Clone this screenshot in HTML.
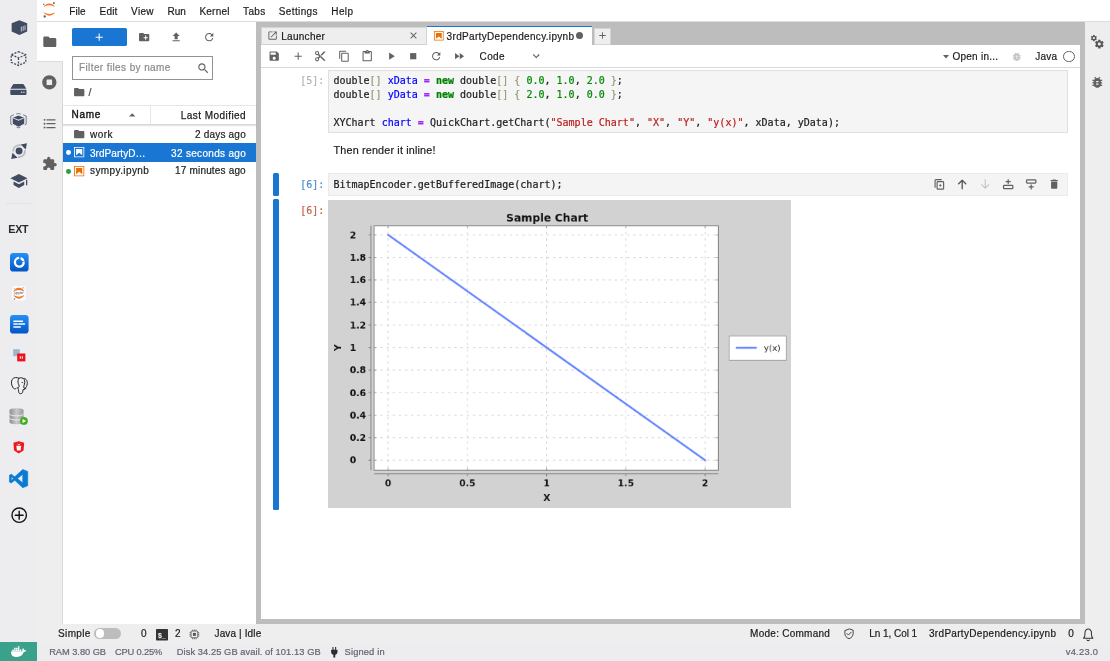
<!DOCTYPE html>
<html lang="en">
<head>
<meta charset="utf-8">
<title>JupyterLab</title>
<style>
*{box-sizing:border-box;margin:0;padding:0}
html,body{width:1110px;height:661px;overflow:hidden;background:#fff}
body{position:relative;font-family:"Liberation Sans",Arial,sans-serif;font-size:10px;color:rgba(0,0,0,.87)}
#root{position:absolute;left:0;top:0;width:1110px;height:661px;will-change:transform}
.abs{position:absolute}
.t{position:absolute;white-space:nowrap;line-height:12px;-webkit-text-stroke:.2px}
svg{position:absolute;overflow:visible}
/* docker chrome */
#dside{left:0;top:0;width:37px;height:643px;background:#ededf0}
#dfoot{left:0;top:642.6px;width:1110px;height:18.4px;background:#ededf0}
#whale{left:0;top:642.2px;width:37px;height:18.8px;background:#3aa18a}
.ft{color:#6d7079;font-size:9.2px}
/* jupyter */
#menubar{left:37px;top:0;width:1073px;height:21.5px;background:#fff;border-bottom:1px solid #dcdcdc}
.menu{font-size:10px;top:5.5px}
#lside{left:37px;top:61px;width:25.5px;height:563px;background:#eee;border-right:1.5px solid #d9d9d9;border-top:1px solid #dcdcdc}
#lside-active{left:37px;top:21.5px;width:26px;height:39.5px;background:#fff}
#fb{left:62.5px;top:21.5px;width:193px;height:602.5px;background:#fff}
#dock{left:255.5px;top:21.5px;width:829.5px;height:602.5px;background:#bdbdbd}
#rside{left:1085px;top:21.5px;width:25px;height:602.5px;background:#eee}
#status{left:37px;top:624px;width:1073px;height:18.6px;background:#eee}
#panel{left:261px;top:45.3px;width:819px;height:574px;background:#fff}
#tab1{left:261px;top:26.5px;width:165.5px;height:18.8px;background:#eee;border:1px solid #d4d4d4;border-bottom:1px solid #d0d0d0}
#tab2{left:426.5px;top:25.5px;width:165.5px;height:20.3px;background:#fff;border-top:1.6px solid #1976d2}
#tabplus{left:593.5px;top:27.5px;width:17.5px;height:17px;background:#eee;border:1px solid #d4d4d4}
#toolbar{left:261px;top:45.3px;width:819px;height:23px;background:#fff;border-bottom:1px solid #d9d9d9}
.cellin{background:#f5f5f5;border:1px solid #e0e0e0}
.code{font-family:"Liberation Mono","DejaVu Sans Mono",monospace;font-size:10px;line-height:14.15px;white-space:pre;position:absolute}
.k{color:#008000;font-weight:bold}.o{color:#a2f;font-weight:bold}.d{color:#00f}.n{color:#080}.s{color:#ba2121}.b{color:#997}
.prompt{font-family:"Liberation Mono",monospace;font-size:10px;position:absolute;line-height:14px;white-space:pre}
.bar{background:#1976d2;border-radius:1.5px}
</style>
</head>
<body>
<div id="root">
<!-- ============ Docker Desktop chrome ============ -->
<div id="dside" class="abs"></div>
<div id="dfoot" class="abs"></div>
<div id="whale" class="abs"></div>

<!-- ============ JupyterLab ============ -->
<div id="menubar" class="abs"></div>
<div id="lside" class="abs"></div>
<div id="lside-active" class="abs"></div>
<div id="fb" class="abs"></div>
<div id="dock" class="abs"></div>
<div id="rside" class="abs"></div>
<div id="status" class="abs"></div>
<div id="panel" class="abs"></div>
<div id="tab1" class="abs"></div>
<div id="tab2" class="abs"></div>
<div id="tabplus" class="abs"></div>
<div id="toolbar" class="abs"></div>

<svg style="left:43.2px;top:2.2px" width="12.4" height="15.9" viewBox="0 0 39 51" preserveAspectRatio="none"><g transform="translate(-1638 -2281)"><g fill="#F37726"><path transform="translate(1639.74 2311.98)" d="M 18.2646 7.13411C 10.4145 7.13411 3.55872 4.2576 0 0C 1.32539 3.8204 3.79556 7.13081 7.0686 9.47303C 10.3417 11.8152 14.2557 13.0734 18.269 13.0734C 22.2823 13.0734 26.1963 11.8152 29.4694 9.47303C 32.7424 7.13081 35.2126 3.8204 36.538 0C 32.9705 4.2576 26.1148 7.13411 18.2646 7.13411Z"/><path transform="translate(1639.73 2285.48)" d="M 18.2733 5.93931C 26.1235 5.93931 32.9793 8.81583 36.538 13.0734C 35.2126 9.25303 32.7424 5.94262 29.4694 3.6004C 26.1963 1.25818 22.2823 0 18.269 0C 14.2557 0 10.3417 1.25818 7.0686 3.6004C 3.79556 5.94262 1.32539 9.25303 0 13.0734C 3.56745 8.82463 10.4232 5.93931 18.2733 5.93931Z"/></g><g fill="#616161"><circle cx="1672.25" cy="2284.27" r="2.95"/><circle cx="1643.5" cy="2327.55" r="3.7"/><circle cx="1640.54" cy="2288.26" r="2.2"/></g></g></svg>
<div class="t" style="left:69.2px;top:5px;font-size:10px;line-height:13px;letter-spacing:0.09px">File</div><div class="t" style="left:99.5px;top:5px;font-size:10px;line-height:13px;letter-spacing:0.22px">Edit</div><div class="t" style="left:131.1px;top:5px;font-size:10px;line-height:13px;letter-spacing:0.30px">View</div><div class="t" style="left:167.5px;top:5px;font-size:10px;line-height:13px;letter-spacing:-0.03px">Run</div>
<div class="t" style="left:199.4px;top:5px;font-size:10px;line-height:13px;letter-spacing:0.24px">Kernel</div><div class="t" style="left:243.0px;top:5px;font-size:10px;line-height:13px;letter-spacing:0.39px">Tabs</div><div class="t" style="left:278.8px;top:5px;font-size:10px;line-height:13px;letter-spacing:0.37px">Settings</div><div class="t" style="left:331.3px;top:5px;font-size:10px;line-height:13px;letter-spacing:0.37px">Help</div>

<div class="abs" style="left:71.7px;top:27.7px;width:55.4px;height:18.4px;background:#1976d2;border-radius:1.6px"></div>
<svg style="left:93.3px;top:30.7px" width="12.4" height="12.4" viewBox="0 0 24 24" ><path fill="#fff" d="M19 13h-6v6h-2v-6H5v-2h6V5h2v6h6v2z"/></svg>
<svg style="left:138.2px;top:31.2px" width="12.3" height="12.3" viewBox="0 0 24 24" ><path fill="#616161" d="M20 6h-8l-2-2H4c-1.11 0-1.99.89-1.99 2L2 18c0 1.11.89 2 2 2h16c1.11 0 2-.89 2-2V8c0-1.11-.89-2-2-2zm-1 8h-3v3h-2v-3h-3v-2h3V9h2v3h3v2z"/></svg>
<svg style="left:170.4px;top:31.2px" width="12.3" height="12.3" viewBox="0 0 24 24" ><path fill="#616161" d="M9 16h6v-6h4l-7-7-7 7h4zm-4 2h14v2H5z"/></svg>
<svg style="left:202.8px;top:30.8px" width="12.4" height="12.4" viewBox="0 0 18 18" ><path fill="#616161" d="M9 13.5c-2.49 0-4.5-2.01-4.5-4.5S6.51 4.5 9 4.5c1.24 0 2.36.52 3.17 1.33L10 8h5V3l-1.76 1.76C12.15 3.68 10.66 3 9 3 5.69 3 3.01 5.69 3.01 9S5.69 15 9 15c2.97 0 5.43-2.16 5.9-5h-1.52c-.46 2-2.24 3.5-4.38 3.5z"/></svg>
<div class="abs" style="left:71.6px;top:56px;width:141.6px;height:23.9px;border:1px solid #939393;background:#fff"></div>
<div class="t" style="left:79.0px;top:61px;font-size:10px;line-height:13px;letter-spacing:0.39px;color:#8a8a8a">Filter files by name</div>
<svg style="left:196.6px;top:61.6px" width="12.4" height="12.4" viewBox="0 0 18 18" ><path fill="#616161" d="M12.1,10.9h-0.7l-0.2-0.2c0.8-0.9,1.3-2.2,1.3-3.5c0-3-2.4-5.4-5.4-5.4S1.8,4.2,1.8,7.1s2.4,5.4,5.4,5.4 c1.3,0,2.5-0.5,3.5-1.3l0.2,0.2v0.7l4.1,4.1l1.2-1.2L12.1,10.9z M7.1,10.9c-2.1,0-3.7-1.7-3.7-3.7s1.7-3.7,3.7-3.7s3.7,1.7,3.7,3.7 S9.2,10.9,7.1,10.9z"/></svg>
<svg style="left:73px;top:85.6px" width="12.4" height="12.4" viewBox="0 0 24 24" ><path fill="#616161" d="M10 4H4c-1.1 0-1.99.9-1.99 2L2 18c0 1.1.9 2 2 2h16c1.1 0 2-.9 2-2V8c0-1.1-.9-2-2-2h-8l-2-2z"/></svg>
<div class="t" style="left:88.5px;top:85px;font-size:10.5px;line-height:14px;color:#444">/</div>
<div class="abs" style="left:62.5px;top:104.6px;width:193px;height:20.2px;border-top:1px solid #e6e6e6;border-bottom:1px solid #d6d6d6;box-shadow:0 1px 1.5px rgba(0,0,0,.12)"></div>
<div class="abs" style="left:149.5px;top:105.6px;width:1px;height:18.4px;background:#e6e6e6"></div>
<div class="t" style="left:71.5px;top:108px;font-size:10px;line-height:13px;letter-spacing:0.70px;-webkit-text-stroke:.45px rgba(0,0,0,.8)">Name</div>
<svg style="left:129.4px;top:112.6px" width="6.4" height="3.6" viewBox="0 0 8 4.5"><path d="M0 4.500L4 .3l4 4.200z" fill="#616161"/></svg>
<div class="t" style="left:180.8px;top:109px;font-size:10px;line-height:13px;letter-spacing:0.45px;-webkit-text-stroke:.25px rgba(0,0,0,.8)">Last Modified</div>
<svg style="left:73.2px;top:128.2px" width="12.4" height="12.4" viewBox="0 0 24 24" ><path fill="#616161" d="M10 4H4c-1.1 0-1.99.9-1.99 2L2 18c0 1.1.9 2 2 2h16c1.1 0 2-.9 2-2V8c0-1.1-.9-2-2-2h-8l-2-2z"/></svg>
<div class="t" style="left:90.0px;top:128px;font-size:10px;line-height:13px;letter-spacing:0.46px">work</div>
<div class="t" style="left:194.9px;top:128px;font-size:10px;line-height:13px;letter-spacing:0.21px">2 days ago</div>
<div class="abs" style="left:62.5px;top:143.4px;width:193px;height:18.4px;background:#1976d2"></div>
<div class="abs" style="left:66.1px;top:150.4px;width:4.8px;height:4.8px;border-radius:50%;background:#fff"></div>
<svg style="left:73.2px;top:146.3px" width="12.3" height="12.3" viewBox="0 0 22 22"><g fill="#fff"><path d="M18.7 3.3v15.4H3.3V3.3h15.4m1.5-1.5H1.8v18.3h18.3l.1-18.3z"/><path d="M16.5 16.5l-5.4-4.3-5.6 4.3v-11h11z"/></g></svg>
<div class="t" style="left:90.0px;top:147px;font-size:10px;line-height:13px;letter-spacing:0.05px;color:#fff">3rdPartyD…</div>
<div class="t" style="left:171.1px;top:147px;font-size:10px;line-height:13px;letter-spacing:0.31px;color:#fff">32 seconds ago</div>
<div class="abs" style="left:66.1px;top:168.8px;width:4.8px;height:4.8px;border-radius:50%;background:#2e9d3e"></div>
<svg style="left:73.2px;top:164.9px" width="12.3" height="12.3" viewBox="0 0 22 22"><g fill="#EF6C00"><path d="M18.7 3.3v15.4H3.3V3.3h15.4m1.5-1.5H1.8v18.3h18.3l.1-18.3z"/><path d="M16.5 16.5l-5.4-4.3-5.6 4.3v-11h11z"/></g></svg>
<div class="t" style="left:90.0px;top:164px;font-size:10px;line-height:13px;letter-spacing:0.40px">sympy.ipynb</div>
<div class="t" style="left:175.1px;top:164px;font-size:10px;line-height:13px;letter-spacing:0.17px">17 minutes ago</div>

<svg style="left:267.3px;top:30.2px" width="11.2" height="11.2" viewBox="0 0 24 24" ><path fill="#616161" d="M19 19H5V5h7V3H5a2 2 0 00-2 2v14a2 2 0 002 2h14c1.1 0 2-.9 2-2v-7h-2v7zM14 3v2h3.59l-9.83 9.83 1.41 1.41L19 6.41V10h2V3h-7z"/></svg>
<div class="t" style="left:281.2px;top:30px;font-size:10px;line-height:13px;letter-spacing:0.29px">Launcher</div>
<svg style="left:408.3px;top:30.3px" width="11" height="11" viewBox="0 0 24 24" ><path fill="#616161" d="M19 6.41L17.59 5 12 10.59 6.41 5 5 6.41 10.59 12 5 17.59 6.41 19 12 13.41 17.59 19 19 17.59 13.41 12z"/></svg>
<svg style="left:432.6px;top:30px" width="11.6" height="11.6" viewBox="0 0 22 22"><g fill="#EF6C00"><path d="M18.7 3.3v15.4H3.3V3.3h15.4m1.5-1.5H1.8v18.3h18.3l.1-18.3z"/><path d="M16.5 16.5l-5.4-4.3-5.6 4.3v-11h11z"/></g></svg>
<div class="t" style="left:446.6px;top:30px;font-size:10px;line-height:13px;letter-spacing:0.33px">3rdPartyDependency.ipynb</div>
<div class="abs" style="left:575.6px;top:32.3px;width:7.2px;height:7.2px;border-radius:50%;background:#616161"></div>
<svg style="left:596.5px;top:30.4px" width="11" height="11" viewBox="0 0 24 24" ><path fill="#616161" d="M19 13h-6v6h-2v-6H5v-2h6V5h2v6h6v2z"/></svg>

<svg style="left:268.2px;top:50.1px" width="12.4" height="12.4" viewBox="0 0 24 24" ><path fill="#616161" d="M17 3H5c-1.11 0-2 .9-2 2v14c0 1.1.89 2 2 2h14c1.1 0 2-.9 2-2V7l-4-4zm-5 16c-1.66 0-3-1.34-3-3s1.34-3 3-3 3 1.34 3 3-1.34 3-3 3zm3-10H5V5h10v4z"/></svg>
<svg style="left:291.6px;top:50.1px" width="12.4" height="12.4" viewBox="0 0 24 24" ><path fill="#616161" d="M19 13h-6v6h-2v-6H5v-2h6V5h2v6h6v2z"/></svg>
<svg style="left:314.4px;top:50.1px" width="12.4" height="12.4" viewBox="0 0 24 24" ><path fill="#616161" d="M9.64 7.64c.23-.5.36-1.05.36-1.64 0-2.21-1.79-4-4-4S2 3.79 2 6s1.79 4 4 4c.59 0 1.14-.13 1.64-.36L10 12l-2.36 2.36C7.14 14.13 6.59 14 6 14c-2.21 0-4 1.79-4 4s1.79 4 4 4 4-1.79 4-4c0-.59-.13-1.14-.36-1.64L12 14l7 7h3v-1L9.64 7.64zM6 8c-1.1 0-2-.89-2-2s.9-2 2-2 2 .89 2 2-.9 2-2 2zm0 12c-1.1 0-2-.89-2-2s.9-2 2-2 2 .89 2 2-.9 2-2 2zm6-7.5c-.28 0-.5-.22-.5-.5s.22-.5.5-.5.5.22.5.5-.22.5-.5.5zM19 3l-6 6 2 2 7-7V3z"/></svg>
<svg style="left:337.6px;top:50.1px" width="12.4" height="12.4" viewBox="0 0 18 18" ><path fill="#616161" d="M11.9,1H3.2C2.4,1,1.7,1.7,1.7,2.5v10.2h1.5V2.5h8.7V1z M14.1,3.9h-8c-0.8,0-1.5,0.7-1.5,1.5v10.2c0,0.8,0.7,1.5,1.5,1.5h8 c0.8,0,1.5-0.7,1.5-1.5V5.4C15.5,4.6,14.9,3.9,14.1,3.9z M14.1,15.5h-8V5.4h8V15.5z"/></svg>
<svg style="left:360.7px;top:50.1px" width="12.4" height="12.4" viewBox="0 0 24 24" ><path fill="#616161" d="M19 2h-4.18C14.4.84 13.3 0 12 0c-1.3 0-2.4.84-2.82 2H5c-1.1 0-2 .9-2 2v16c0 1.1.9 2 2 2h14c1.1 0 2-.9 2-2V4c0-1.1-.9-2-2-2zm-7 0c.55 0 1 .45 1 1s-.45 1-1 1-1-.45-1-1 .45-1 1-1zm7 18H5V4h2v3h10V4h2v16z"/></svg>
<svg style="left:385.0px;top:50.1px" width="12.4" height="12.4" viewBox="0 0 24 24" ><path fill="#616161" d="M8 5v14l11-7z"/></svg>
<svg style="left:406.9px;top:50.1px" width="12.4" height="12.4" viewBox="0 0 24 24" ><path fill="#616161" d="M6 6h12v12H6z"/></svg>
<svg style="left:430.2px;top:50.1px" width="12.4" height="12.4" viewBox="0 0 18 18" ><path fill="#616161" d="M9 13.5c-2.49 0-4.5-2.01-4.5-4.5S6.51 4.5 9 4.5c1.24 0 2.36.52 3.17 1.33L10 8h5V3l-1.76 1.76C12.15 3.68 10.66 3 9 3 5.69 3 3.01 5.69 3.01 9S5.69 15 9 15c2.97 0 5.43-2.16 5.9-5h-1.52c-.46 2-2.24 3.5-4.38 3.5z"/></svg>
<svg style="left:453.4px;top:50.1px" width="12.4" height="12.4" viewBox="0 0 24 24" ><path fill="#616161" d="M4 18l8.5-6L4 6v12zm9-12v12l8.5-6L13 6z"/></svg>
<div class="t" style="left:479.6px;top:50px;font-size:10px;line-height:13px;letter-spacing:0.33px">Code</div>
<svg style="left:530.2px;top:50.4px" width="12.4" height="12.4" viewBox="0 0 18 18" ><path fill="#616161" d="M5.2,5.9L9,9.7l3.8-3.8l1.2,1.2l-4.9,5l-4.9-5L5.2,5.9z"/></svg>
<svg style="left:943px;top:54.6px" width="6" height="4" viewBox="0 0 6 4"><path d="M0 0h6L3 3.6z" fill="#616161"/></svg>
<div class="t" style="left:952.5px;top:50px;font-size:10px;line-height:13px;letter-spacing:0.24px">Open in...</div>
<svg style="left:1011.3px;top:50.6px" width="11.4" height="11.4" viewBox="0 0 24 24" ><path fill="#c4c4c4" d="M20 8h-2.81c-.45-.78-1.07-1.45-1.82-1.96L17 4.41 15.59 3l-2.17 2.17C12.96 5.06 12.49 5 12 5c-.49 0-.96.06-1.41.17L8.41 3 7 4.41l1.62 1.63C7.88 6.55 7.26 7.22 6.81 8H4v2h2.09c-.05.33-.09.66-.09 1v1H4v2h2v1c0 .34.04.67.09 1H4v2h2.81c1.04 1.79 2.97 3 5.19 3s4.15-1.21 5.19-3H20v-2h-2.09c.05-.33.09-.66.09-1v-1h2v-2h-2v-1c0-.34-.04-.67-.09-1H20V8zm-6 8h-4v-2h4v2zm0-4h-4v-2h4v2z"/></svg>
<div class="t" style="left:1035.2px;top:50px;font-size:10px;line-height:13px;letter-spacing:0.26px">Java</div>
<div class="abs" style="left:1063.4px;top:50.8px;width:11.4px;height:11.4px;border-radius:50%;border:1.1px solid #616161"></div>

<div class="abs cellin" style="left:328.4px;top:70.2px;width:739.8px;height:63.2px"></div>
<div class="t" style="font-family:'DejaVu Sans Mono','Liberation Mono',monospace;font-size:10px;line-height:13px;left:294.4px;width:30px;text-align:right;top:74px;color:#b4b4b4">[5]:</div>
<div class="t" style="font-family:'DejaVu Sans Mono','Liberation Mono',monospace;font-size:10.03px;line-height:13px;left:333.4px;top:74px;white-space:pre;color:#212121">double<span class="b">[]</span> <span class="d">xData</span> <span class="o">=</span> <span class="k">new</span> double<span class="b">[]</span> <span class="b">{</span> <span class="n">0.0</span>, <span class="n">1.0</span>, <span class="n">2.0</span> <span class="b">}</span>;</div><div class="t" style="font-family:'DejaVu Sans Mono','Liberation Mono',monospace;font-size:10.03px;line-height:13px;left:333.4px;top:88px;white-space:pre;color:#212121">double<span class="b">[]</span> <span class="d">yData</span> <span class="o">=</span> <span class="k">new</span> double<span class="b">[]</span> <span class="b">{</span> <span class="n">2.0</span>, <span class="n">1.0</span>, <span class="n">0.0</span> <span class="b">}</span>;</div><div class="t" style="font-family:'DejaVu Sans Mono','Liberation Mono',monospace;font-size:10.03px;line-height:13px;left:333.4px;top:116px;white-space:pre;color:#212121">XYChart <span class="d">chart</span> <span class="o">=</span> QuickChart.getChart(<span class="s">&quot;Sample Chart&quot;</span>, <span class="s">&quot;X&quot;</span>, <span class="s">&quot;Y&quot;</span>, <span class="s">&quot;y(x)&quot;</span>, xData, yData);</div>
<div class="t" style="left:333.6px;top:143px;font-size:10.8px;line-height:14px;letter-spacing:0.16px">Then render it inline!</div>
<div class="abs bar" style="left:272.9px;top:173.3px;width:6.2px;height:22.3px"></div>
<div class="abs bar" style="left:272.9px;top:199.4px;width:6.2px;height:310.2px"></div>
<div class="abs cellin" style="left:328.4px;top:173.1px;width:739.8px;height:22.6px;border-color:#ebebeb;background:#f4f4f4"></div>
<div class="t" style="font-family:'DejaVu Sans Mono','Liberation Mono',monospace;font-size:10px;line-height:13px;left:294.4px;width:30px;text-align:right;top:178px;color:#4a8fcb">[6]:</div>
<div class="t" style="font-family:'DejaVu Sans Mono','Liberation Mono',monospace;font-size:10.03px;line-height:13px;left:333.4px;top:178px;white-space:pre;color:#212121">BitmapEncoder.getBufferedImage(chart);</div>
<div class="t" style="font-family:'DejaVu Sans Mono','Liberation Mono',monospace;font-size:10px;line-height:13px;left:294.4px;width:30px;text-align:right;top:204px;color:#c4654a">[6]:</div>
<svg style="left:932.6px;top:177.9px" width="12.4" height="12.4" viewBox="0 0 16 16" fill="none" stroke="#616161" stroke-width="1.6" stroke-linecap="round" stroke-linejoin="round"><path d="M2.7 11.8V3.1a1 1 0 0 1 1-1h7" stroke-width="1.5"/><rect x="5.3" y="4.7" width="8.4" height="9.7" rx="1" stroke-width="1.5"/><path d="M8.2 9.6h2.6M9.5 8.3v2.6" stroke-width="1"/></svg>
<svg style="left:955.8px;top:178.2px" width="12.4" height="12.4" viewBox="0 0 16 16" fill="none" stroke="#555" stroke-width="1.6" stroke-linecap="round" stroke-linejoin="round"><path d="M8 14V3M3.4 7.4L8 2.8l4.6 4.6" stroke-width="1.7"/></svg>
<svg style="left:978.8px;top:178.2px" width="12.4" height="12.4" viewBox="0 0 16 16" fill="none" stroke="#c2c2c2" stroke-width="1.6" stroke-linecap="round" stroke-linejoin="round"><path d="M8 2v11M3.4 8.6L8 13.2l4.6-4.6" stroke-width="1.3"/></svg>
<svg style="left:1002.0px;top:178.4px" width="12.4" height="12.4" viewBox="0 0 16 16" fill="none" stroke="#616161" stroke-width="1.6" stroke-linecap="round" stroke-linejoin="round"><rect x="2" y="9.6" width="12" height="4.2" rx="1"/><path d="M8 2v5.4M5.3 4.7h5.4" stroke-width="1.5"/></svg>
<svg style="left:1025.0px;top:178.2px" width="12.4" height="12.4" viewBox="0 0 16 16" fill="none" stroke="#616161" stroke-width="1.6" stroke-linecap="round" stroke-linejoin="round"><rect x="2" y="2.4" width="12" height="4.2" rx="1"/><path d="M8 8.8v5.4M5.3 11.5h5.4" stroke-width="1.5"/></svg>
<svg style="left:1048.2px;top:177.9px" width="12.4" height="12.4" viewBox="0 0 24 24"><path fill="#616161" d="M6 19c0 1.1.9 2 2 2h8c1.1 0 2-.9 2-2V7H6v12zM19 4h-3.500l-1-1h-5l-1 1H5v2h14V4z"/></svg>

<svg style="left:328.4px;top:199.6px" width="462.5" height="307.9" preserveAspectRatio="none" viewBox="0 0 600 400" font-family="'DejaVu Sans','Liberation Sans',sans-serif"><rect width="600" height="400" fill="#d2d2d2"/><rect x="59.9" y="33.6" width="446.5" height="317.59999999999997" fill="#fff"/><path d="M59.9 45.3H506.4M59.9 74.6H506.4M59.9 103.9H506.4M59.9 133.1H506.4M59.9 162.4H506.4M59.9 191.7H506.4M59.9 221.0H506.4M59.9 250.3H506.4M59.9 279.5H506.4M59.9 308.8H506.4M59.9 338.1H506.4M78.0 33.6V351.2M180.8 33.6V351.2M283.6 33.6V351.2M386.4 33.6V351.2M489.2 33.6V351.2" stroke="#cdcdcd" stroke-width="1" stroke-dasharray="3 5" fill="none"/><path d="M59.9 45.3h3M506.4 45.3h-3M59.9 74.6h3M506.4 74.6h-3M59.9 103.9h3M506.4 103.9h-3M59.9 133.1h3M506.4 133.1h-3M59.9 162.4h3M506.4 162.4h-3M59.9 191.7h3M506.4 191.7h-3M59.9 221.0h3M506.4 221.0h-3M59.9 250.3h3M506.4 250.3h-3M59.9 279.5h3M506.4 279.5h-3M59.9 308.8h3M506.4 308.8h-3M59.9 338.1h3M506.4 338.1h-3M78.0 33.6v3M78.0 351.2v-3M180.8 33.6v3M180.8 351.2v-3M283.6 33.6v3M283.6 351.2v-3M386.4 33.6v3M386.4 351.2v-3M489.2 33.6v3M489.2 351.2v-3" stroke="#9a9a9a" stroke-width="1" fill="none"/><path d="M78.0 45.3L489.2 338.1" stroke="#4b72ff" stroke-opacity=".85" stroke-width="2.5" stroke-linecap="round" fill="none"/><rect x="59.9" y="33.6" width="446.5" height="317.59999999999997" fill="none" stroke="#7d7d7d" stroke-width="1.1"/><path d="M55.8 33.6V351.2M59.9 355.7H506.4M52.6 45.3H55.8M52.6 74.6H55.8M52.6 103.9H55.8M52.6 133.1H55.8M52.6 162.4H55.8M52.6 191.7H55.8M52.6 221.0H55.8M52.6 250.3H55.8M52.6 279.5H55.8M52.6 308.8H55.8M52.6 338.1H55.8M78.0 355.8V359M180.8 355.8V359M283.6 355.8V359M386.4 355.8V359M489.2 355.8V359" stroke="#7d7d7d" stroke-width="1.1" fill="none"/><g font-weight="bold" font-size="12" fill="#111"><text x="28.2" y="49.7">2</text><text x="28.2" y="79.0">1.8</text><text x="28.2" y="108.3">1.6</text><text x="28.2" y="137.5">1.4</text><text x="28.2" y="166.8">1.2</text><text x="28.2" y="196.1">1</text><text x="28.2" y="225.4">0.8</text><text x="28.2" y="254.7">0.6</text><text x="28.2" y="283.9">0.4</text><text x="28.2" y="313.2">0.2</text><text x="28.2" y="342.5">0</text><text x="78.0" y="372.2" text-anchor="middle">0</text><text x="180.8" y="372.2" text-anchor="middle">0.5</text><text x="283.6" y="372.2" text-anchor="middle">1</text><text x="386.4" y="372.2" text-anchor="middle">1.5</text><text x="489.2" y="372.2" text-anchor="middle">2</text><text x="283.9" y="390.8" text-anchor="middle">X</text><text transform="translate(17.2 191.9) rotate(-90)" text-anchor="middle">Y</text><text x="284.3" y="28.3" text-anchor="middle" font-size="14">Sample Chart</text></g><rect x="520.4" y="176.8" width="74" height="31.5" fill="#fff" stroke="#9b9b9b" stroke-width="1"/><path d="M530 192H555.2" stroke="#4b72ff" stroke-opacity=".85" stroke-width="2.5" stroke-linecap="round"/><text x="565.4" y="196" font-size="11" fill="#222">y(x)</text></svg>

<div class="t" style="left:58.1px;top:627px;font-size:10px;line-height:13px;letter-spacing:0.32px">Simple</div>
<div class="abs" style="left:94.3px;top:627.9px;width:26.5px;height:11.2px;border-radius:5.6px;background:#bdbdbd"></div>
<div class="abs" style="left:95.9px;top:629.2px;width:8.6px;height:8.6px;border-radius:50%;background:#fff"></div>
<div class="t" style="left:140.9px;top:627px;font-size:10px;line-height:13px">0</div>
<svg style="left:156px;top:628.8px" width="12" height="11.4" viewBox="0 0 12 11.4"><rect width="12" height="11.4" rx=".6" fill="#333"/><text x="2" y="8.6" font-family="'Liberation Sans',sans-serif" font-weight="bold" font-size="7" fill="#fff">$_</text></svg>
<div class="t" style="left:175.1px;top:627px;font-size:10px;line-height:13px">2</div>
<svg style="left:189.4px;top:628.6px" width="10.8" height="10.8" viewBox="0 0 16 16" fill="none" stroke="#555" stroke-width="1.3"><rect x="3" y="3" width="10" height="10" rx="1.6"/><rect x="5.8" y="5.8" width="4.4" height="4.4" fill="#555" stroke="none"/><path d="M5.5 .8v2M8 .8v2M10.500 .8v2M5.500 13.200v2M8 13.200v2M10.500 13.200v2M.8 5.500h2M.8 8h2M.8 10.500h2M13.200 5.500h2M13.200 8h2M13.200 10.500h2" stroke-width="1.1"/></svg>
<div class="t" style="left:214.5px;top:627px;font-size:10px;line-height:13px;letter-spacing:0.13px">Java | Idle</div>
<div class="t" style="left:750.1px;top:627px;font-size:10px;line-height:13px;letter-spacing:0.26px">Mode: Command</div>
<svg style="left:843.4px;top:627.6px" width="12" height="11.6" viewBox="0 0 24 24" fill="none" stroke="#3c3c3c" stroke-width="2" stroke-linejoin="round" stroke-linecap="round"><path d="M12 2.200L3.400 5.400v5.800c0 5.200 3.600 9.400 8.600 10.800 5-1.400 8.600-5.600 8.600-10.800V5.400z"/><path d="M7.800 11.600l3 3 5.600-5.800"/></svg>
<div class="t" style="left:869.2px;top:627px;font-size:10px;line-height:13px;letter-spacing:-0.04px">Ln 1, Col 1</div>
<div class="t" style="left:929.0px;top:627px;font-size:10px;line-height:13px;letter-spacing:0.31px">3rdPartyDependency.ipynb</div>
<div class="t" style="left:1068.2px;top:627px;font-size:10px;line-height:13px">0</div>
<svg style="left:1081.4px;top:626.8px" width="14.4" height="15" viewBox="0 0 24 25" fill="none" stroke="#333" stroke-width="1.7" stroke-linejoin="round" stroke-linecap="round"><path d="M4.200 18.600h15.600c-1.500-1.500-2.400-3-2.400-6.200v-2.800c0-3.400-2.300-6.200-5.400-6.200s-5.400 2.800-5.400 6.200v2.800c0 3.200-.9 4.700-2.400 6.200z"/><path d="M10 21.600c.5.800 1.200 1.200 2 1.200s1.500-.4 2-1.200"/></svg>
<svg style="left:10.8px;top:643.9px" width="15.2" height="15.2" viewBox="0 0 24 24"><path fill="#fff" d="M13.983 11.078h2.119a.186.186 0 00.186-.185V9.006a.186.186 0 00-.186-.186h-2.119a.185.185 0 00-.185.185v1.888c0 .102.083.185.185.185m-2.954-5.43h2.118a.186.186 0 00.186-.186V3.574a.186.186 0 00-.186-.185h-2.118a.185.185 0 00-.185.185v1.888c0 .102.082.185.185.185m0 2.716h2.118a.187.187 0 00.186-.186V6.29a.186.186 0 00-.186-.185h-2.118a.185.185 0 00-.185.185v1.887c0 .102.082.185.185.186m-2.93 0h2.12a.186.186 0 00.184-.186V6.29a.185.185 0 00-.185-.185H8.1a.185.185 0 00-.185.185v1.887c0 .102.083.185.185.186m-2.964 0h2.119a.186.186 0 00.185-.186V6.29a.185.185 0 00-.185-.185H5.136a.186.186 0 00-.186.185v1.887c0 .102.084.185.186.186m5.893 2.715h2.118a.186.186 0 00.186-.185V9.006a.186.186 0 00-.186-.186h-2.118a.185.185 0 00-.185.185v1.888c0 .102.082.185.185.185m-2.93 0h2.12a.185.185 0 00.184-.185V9.006a.185.185 0 00-.184-.186h-2.12a.185.185 0 00-.184.185v1.888c0 .102.083.185.185.185m-2.964 0h2.119a.185.185 0 00.185-.185V9.006a.185.185 0 00-.184-.186h-2.12a.186.186 0 00-.186.186v1.887c0 .102.084.185.186.185m-2.92 0h2.12a.185.185 0 00.184-.185V9.006a.185.185 0 00-.184-.186h-2.12a.185.185 0 00-.184.185v1.888c0 .102.082.185.185.185M23.763 9.89c-.065-.051-.672-.51-1.954-.51-.338.001-.676.03-1.01.087-.248-1.7-1.653-2.53-1.716-2.566l-.344-.199-.226.327c-.284.438-.49.922-.612 1.43-.23.97-.09 1.882.403 2.661-.595.332-1.55.413-1.744.42H.751a.751.751 0 00-.75.748 11.376 11.376 0 00.692 4.062c.545 1.428 1.355 2.48 2.41 3.124 1.18.723 3.1 1.137 5.275 1.137.983.003 1.963-.086 2.93-.266a12.248 12.248 0 003.823-1.389c.98-.567 1.86-1.288 2.61-2.136 1.252-1.418 1.998-2.997 2.553-4.4h.221c1.372 0 2.215-.549 2.68-1.009.309-.293.55-.65.707-1.046l.098-.288z"/></svg>
<div class="t" style="left:49.2px;top:646px;font-size:9.3px;line-height:12px;letter-spacing:-0.05px;color:#62666f">RAM 3.80 GB</div>
<div class="t" style="left:115.0px;top:646px;font-size:9.3px;line-height:12px;letter-spacing:-0.16px;color:#62666f">CPU 0.25%</div>
<div class="t" style="left:176.8px;top:646px;font-size:9.3px;line-height:12px;letter-spacing:0.07px;color:#62666f">Disk 34.25 GB avail. of 101.13 GB</div>
<svg style="left:330px;top:646.6px" width="8.6" height="10.6" viewBox="0 0 16 20"><path fill="#2b2d33" d="M4.500 0h2v5h3V0h2v5H14v4.500c0 2.600-1.800 4.700-4.200 5.300V20H6.200v-5.200C3.800 14.200 2 12.100 2 9.500V5h2.500z"/></svg>
<div class="t" style="left:344.6px;top:646px;font-size:9.3px;line-height:12px;letter-spacing:0.15px;color:#62666f">Signed in</div>
<div class="t" style="left:1065.7px;top:646px;font-size:9.3px;line-height:12px;letter-spacing:0.30px;color:#62666f">v4.23.0</div>

<!-- containers -->
<svg style="left:10.6px;top:19.8px" width="16.8" height="15.2" viewBox="0 0 22 20"><path fill="#424c60" d="M11 .4l10.200 4v10.600L11 19.600.8 15V4.400z"/><path d="M13.600 8.800v6.400M16 7.900v6.400M18.400 7v6.400" stroke="#c3c7cf" stroke-width="1.300"/></svg>
<!-- images -->
<svg style="left:10.400px;top:50.800px" width="17" height="15.200" viewBox="0 0 22 20" fill="none" stroke="#424c60" stroke-width="1.700" stroke-dasharray="2.600 1.700"><path d="M11 1l9.600 3.800v10L11 19 1.400 14.800v-10z"/><path d="M1.800 5.200L11 9l9.200-3.800M11 9.400V18.600"/></svg>
<!-- volumes -->
<svg style="left:10.400px;top:83.800px" width="16.800" height="11" viewBox="0 0 22 14.400"><path fill="#424c60" d="M5.200 0h11.600a1.400 1.400 0 0 1 1.250.77L21.400 6.200H.6L3.950.77A1.400 1.400 0 0 1 5.200 0zM.4 7.400h21.200v5.600a1.400 1.400 0 0 1-1.400 1.400H1.800A1.400 1.400 0 0 1 .4 13z"/><circle cx="15.200" cy="10.800" r="1" fill="#d5d8de"/><circle cx="18.200" cy="10.800" r="1" fill="#d5d8de"/></svg>
<!-- dev environments -->
<svg style="left:10.400px;top:112.600px" width="17" height="14.800" viewBox="0 0 22 19"><path fill="#424c60" d="M11 3.200l7.400 2.900v7.800L11 17.600l-7.400-3.700V6.100z"/><path d="M3.900 6.200L11 9.200l7.100-3" stroke="#dfe1e6" stroke-width="1.300" fill="none"/><path d="M5 2.200L1 3.900v10.400l2 1M17 2.200l4 1.700v10.400l-2 1M8 1.300L11 .5l3 .8M8.500 18.200l2.500.9 2.500-.9" fill="none" stroke="#424c60" stroke-width="1.100" stroke-opacity=".8"/></svg>
<!-- scout -->
<svg style="left:10.800px;top:142.600px" width="16.200" height="16.200" viewBox="0 0 20 20"><circle cx="10" cy="10" r="7.300" fill="none" stroke="#b7bcc6" stroke-width="2.200" stroke-dasharray="14 8.930" transform="rotate(-10 10 10)"/><circle cx="10" cy="10" r="4.300" fill="#424c60"/><path fill="#424c60" d="M19.700.3L18.200 8.100 11.900 1.800zM.3 19.700L1.800 11.900 8.100 18.200z"/></svg>
<!-- learning center -->
<svg style="left:10.400px;top:174.200px" width="17.800" height="14.600" viewBox="0 0 24 19.700"><path fill="#424c60" d="M12 0l11.600 5.800L12 11.600.4 5.800zM4.800 10.200L12 13.800l7.200-3.600v4.600L12 18.800l-7.200-4zM21.600 7.600h1.700v7.600h-1.700z"/></svg>
<div class="abs" style="left:6.300px;top:203.300px;width:24.400px;height:1px;background:#e1e1e6"></div>
<div class="t" style="left:8.3px;top:222px;font-size:10.7px;line-height:14px;letter-spacing:-0.25px;color:#2a2a2c;font-weight:bold;-webkit-text-stroke:0">EXT</div>
<!-- ext 1: blue ring -->
<svg style="left:9.800px;top:253.300px" width="18.600" height="18.600" viewBox="0 0 20 20"><defs><linearGradient id="bg1" x1="0" y1="0" x2="0" y2="1"><stop offset="0" stop-color="#2490f5"/><stop offset="1" stop-color="#0553c4"/></linearGradient></defs><rect width="20" height="20" rx="3.600" fill="url(#bg1)"/><circle cx="10" cy="10" r="4.700" fill="none" stroke="#fff" stroke-width="2.500" stroke-dasharray="22.100 1.500 4.400 1.530" transform="rotate(-8 10 10)"/></svg>
<!-- ext 2: jupyter -->
<svg style="left:12.100px;top:286.400px" width="13.800" height="14.600" viewBox="0 0 20 21"><rect width="20" height="21" rx="3.400" fill="#fafbfd"/><path d="M1.800 8.600C3.200 4.800 6.400 2.600 10 2.600s6.800 2.200 8.200 6C16 6.600 13.200 5.600 10 5.600S4 6.600 1.800 8.600z" fill="#f37726"/><path d="M1.800 12.400C3.200 16.200 6.400 18.400 10 18.400s6.800-2.200 8.200-6C16 14.400 13.200 15.400 10 15.400S4 14.400 1.800 12.400z" fill="#f37726"/><text x="10" y="12" font-size="4.600" text-anchor="middle" fill="#4e4e4e" font-family="'Liberation Sans',sans-serif">jupyter</text><circle cx="16" cy="2.600" r=".9" fill="#777"/><circle cx="3.600" cy="18.600" r="1.100" fill="#777"/><circle cx="3.200" cy="3.400" r=".7" fill="#777"/></svg>
<!-- ext 3: blue lines -->
<svg style="left:9.800px;top:315.200px" width="18.600" height="18.600" viewBox="0 0 20 20"><rect width="20" height="20" rx="3.600" fill="url(#bg1)"/><path d="M4.200 6.600h9.200M4.200 9.800h3.600M9.400 9.800h6.200M4.200 13h6.800" stroke="#fff" stroke-width="1.600" stroke-linecap="round"/></svg>
<!-- ext 4 -->
<svg style="left:12.600px;top:348.600px" width="12.600" height="12.600" viewBox="0 0 12.600 12.600"><rect x=".2" y=".2" width="6.600" height="7" fill="#9fb6c9"/><rect x="4.200" y="4.500" width="8.200" height="7.900" fill="#f0101c"/><path d="M7.300 7.200v2.600M9.300 7.200v2.600" stroke="#fff" stroke-width="1"/></svg>
<!-- ext 5: elephant -->
<svg style="left:9.600px;top:375.600px" width="18.600" height="18.400" viewBox="0 0 24 24" fill="#f1f1f4" stroke="#1a1a1a" stroke-width="1.250" stroke-linejoin="round" stroke-linecap="round"><path d="M16.800 3.200c3.600-.6 6 2.600 5.600 6.800-.3 2.700-1.500 5-3 6.400-.6.500-1.200.1-1.300-.7"/><path d="M7.800 16.400c-1.400 1-3.200.4-4.400-1.800C1.700 11.500 1 7.200 2.800 4.400 4.700 1.600 9 1.500 11.600 3c2-1.200 5.400-.9 6.800 1.600 1.300 2.300.7 5.400-.3 7.800-.4 1-.3 2.400 0 3.400.2.700 1.700.5 2.400.4-.6 1.100-2.200 1.700-3.500 1.300-.4 1.500-.2 3-.9 4.300-.7 1.300-2.600 1.800-3.800.9-1.300-1-1.200-3-1.300-4.600-.1-1.300-.3-2-1.100-2.600"/><path d="M11.400 3.200c-1.200 1.800-1.400 4.400-.8 6.400.4 1.300 1.300 2.400 1.200 3.800-.1 1.200-1 2-1.900 2.100M15.600 8.200c.5-.2 1 .1 1.100.6" fill="none"/></svg>
<!-- ext 6: database with play -->
<svg style="left:8.800px;top:407.800px" width="19.800" height="18" viewBox="0 0 22 20"><defs><linearGradient id="dbg" x1="0" y1="0" x2="1" y2="0"><stop offset="0" stop-color="#8f8f8f"/><stop offset=".5" stop-color="#c9c9c9"/><stop offset="1" stop-color="#9a9a9a"/></linearGradient></defs><path d="M.6 2.600C.6 1.300 4 .4 8.400.4s7.800.9 7.800 2.200v13.200c0 1.300-3.400 2.200-7.800 2.200S.6 17.100.6 15.800z" fill="url(#dbg)"/><path d="M.6 6.600c0 1.200 3.400 2.100 7.800 2.100s7.800-.9 7.800-2.100M.6 11.200c0 1.200 3.400 2.100 7.800 2.100s7.800-.9 7.800-2.100" stroke="#ececec" stroke-width="1.100" fill="none"/><circle cx="16.600" cy="14.400" r="4.300" fill="#3fae1f"/><path d="M15.100 12.100v4.600l3.900-2.300z" fill="#fff"/></svg>
<!-- ext 7: red shield -->
<svg style="left:13.200px;top:441.200px" width="11.600" height="12.800" viewBox="0 0 18 20"><path d="M9 .3l8.400 2.500-1 12.200L9 19.700 1.600 15 .6 2.800z" fill="#f2141c"/><path d="M5.200 7.600h7.600l-.9 7.400H6.100z" fill="#fff"/><path d="M7 4.200L9 6.400l2-2.200" stroke="#fff" stroke-width="1.300" fill="none"/></svg>
<!-- ext 8: vscode -->
<svg style="left:9.400px;top:468.700px" width="19.200" height="19.200" viewBox="0 0 24 24"><path fill="#0a7bd2" fill-rule="evenodd" stroke="#0a7bd2" stroke-width=".8" stroke-linejoin="round" d="M17.200.6L7.200 9.800 2.800 6.500.6 7.700v8.600l2.200 1.200 4.400-3.300 10 9.200 6.200-2.500V3.100zM2.900 14.400V9.600L5.500 12zM17.200 17.400L10.600 12l6.600-5.400z"/></svg>
<!-- add -->
<svg style="left:10.700px;top:507px" width="16.400" height="16.400" viewBox="0 0 20 20" fill="none" stroke="#111" stroke-width="1.700" stroke-linecap="round"><circle cx="10" cy="10" r="8.800"/><path d="M5.200 10h9.600M10 5.200v9.600"/></svg>

<svg style="left:41.5px;top:33.9px" width="15.6" height="15.6" viewBox="0 0 24 24" ><path fill="#616161" d="M10 4H4c-1.1 0-1.99.9-1.99 2L2 18c0 1.1.9 2 2 2h16c1.1 0 2-.9 2-2V8c0-1.1-.9-2-2-2h-8l-2-2z"/></svg>
<svg style="left:42px;top:75px" width="14.700" height="14.700" viewBox="0 0 512 512"><path fill="#616161" d="M256 8C119 8 8 119 8 256s111 248 248 248 248-111 248-248S393 8 256 8zm96 328c0 8.8-7.2 16-16 16H176c-8.8 0-16-7.2-16-16V176c0-8.8 7.2-16 16-16h160c8.8 0 16 7.2 16 16v160z"/></svg>
<svg style="left:41.5px;top:115.5px" width="15.4" height="15.4" viewBox="0 0 24 24" ><path fill="#616161" d="M7,5H21V7H7V5M7,13V11H21V13H7M4,4.5A1.5,1.5 0 0,1 5.5,6A1.5,1.5 0 0,1 4,7.5A1.5,1.5 0 0,1 2.5,6A1.5,1.5 0 0,1 4,4.5M4,10.5A1.5,1.5 0 0,1 5.5,12A1.5,1.5 0 0,1 4,13.5A1.5,1.5 0 0,1 2.5,12A1.5,1.5 0 0,1 4,10.5M7,19V17H21V19H7M4,16.5A1.5,1.5 0 0,1 5.5,18A1.5,1.5 0 0,1 4,19.5A1.5,1.5 0 0,1 2.5,18A1.5,1.5 0 0,1 4,16.5Z"/></svg>
<svg style="left:41.7px;top:156.3px" width="15.4" height="15.4" viewBox="0 0 24 24" ><path fill="#616161" d="M20.5 11H19V7c0-1.1-.9-2-2-2h-4V3.5C13 2.12 11.88 1 10.5 1S8 2.12 8 3.5V5H4c-1.1 0-1.99.9-1.99 2v3.8H3.5c1.49 0 2.7 1.21 2.7 2.7s-1.21 2.7-2.7 2.7H2V20c0 1.1.9 2 2 2h3.8v-1.5c0-1.49 1.21-2.7 2.7-2.7 1.49 0 2.7 1.21 2.7 2.7V22H17c1.1 0 2-.9 2-2v-4h1.5c1.38 0 2.5-1.12 2.5-2.5S21.88 11 20.5 11z"/></svg>
<svg style="left:1088.800px;top:34px" width="16" height="16" viewBox="0 0 24 24" fill="#555"><g transform="translate(7.600 7.200) scale(.66)"><path d="M19.43 12.98c.04-.32.07-.64.07-.98s-.03-.66-.07-.98l2.11-1.65c.19-.15.24-.42.12-.64l-2-3.46c-.12-.22-.39-.3-.61-.22l-2.49 1c-.52-.4-1.08-.73-1.69-.98l-.38-2.65C14.46 2.18 14.25 2 14 2h-4c-.25 0-.46.18-.49.42l-.38 2.65c-.61.25-1.17.59-1.69.98l-2.49-1c-.23-.09-.49 0-.61.22l-2 3.46c-.13.22-.07.49.12.64l2.11 1.65c-.04.32-.07.65-.07.98s.03.66.07.98l-2.11 1.65c-.19.15-.24.42-.12.64l2 3.46c.12.22.39.3.61.22l2.49-1c.52.4 1.08.73 1.69.98l.38 2.65c.03.24.24.42.49.42h4c.25 0 .46-.18.49-.42l.38-2.65c.61-.25 1.17-.59 1.69-.98l2.49 1c.23.09.49 0 .61-.22l2-3.46c.12-.22.07-.49-.12-.64l-2.11-1.65zM12 15.5c-1.93 0-3.5-1.57-3.5-3.5s1.57-3.5 3.5-3.5 3.5 1.57 3.5 3.5-1.57 3.5-3.5 3.5z"/></g><g transform="translate(1.800 .6) scale(.46)"><path d="M19.43 12.98c.04-.32.07-.64.07-.98s-.03-.66-.07-.98l2.11-1.65c.19-.15.24-.42.12-.64l-2-3.46c-.12-.22-.39-.3-.61-.22l-2.49 1c-.52-.4-1.08-.73-1.69-.98l-.38-2.65C14.46 2.18 14.25 2 14 2h-4c-.25 0-.46.18-.49.42l-.38 2.65c-.61.25-1.17.59-1.69.98l-2.49-1c-.23-.09-.49 0-.61.22l-2 3.46c-.13.22-.07.49.12.64l2.11 1.65c-.04.32-.07.65-.07.98s.03.66.07.98l-2.11 1.65c-.19.15-.24.42-.12.64l2 3.46c.12.22.39.3.61.22l2.49-1c.52.4 1.08.73 1.69.98l.38 2.65c.03.24.24.42.49.42h4c.25 0 .46-.18.49-.42l.38-2.65c.61-.25 1.17-.59 1.69-.98l2.49 1c.23.09.49 0 .61-.22l2-3.46c.12-.22.07-.49-.12-.64l-2.11-1.65zM12 15.5c-1.93 0-3.5-1.57-3.5-3.5s1.57-3.5 3.5-3.5 3.5 1.57 3.5 3.5-1.57 3.5-3.5 3.5z"/></g></svg>
<svg style="left:1089.7px;top:74.7px" width="14.6" height="14.6" viewBox="0 0 24 24" ><path fill="#616161" d="M20 8h-2.81c-.45-.78-1.07-1.45-1.82-1.96L17 4.41 15.59 3l-2.17 2.17C12.96 5.06 12.49 5 12 5c-.49 0-.96.06-1.41.17L8.41 3 7 4.41l1.62 1.63C7.88 6.55 7.26 7.22 6.81 8H4v2h2.09c-.05.33-.09.66-.09 1v1H4v2h2v1c0 .34.04.67.09 1H4v2h2.81c1.04 1.79 2.97 3 5.19 3s4.15-1.21 5.19-3H20v-2h-2.09c.05-.33.09-.66.09-1v-1h2v-2h-2v-1c0-.34-.04-.67-.09-1H20V8zm-6 8h-4v-2h4v2zm0-4h-4v-2h4v2z"/></svg>

</div>
</body>
</html>
